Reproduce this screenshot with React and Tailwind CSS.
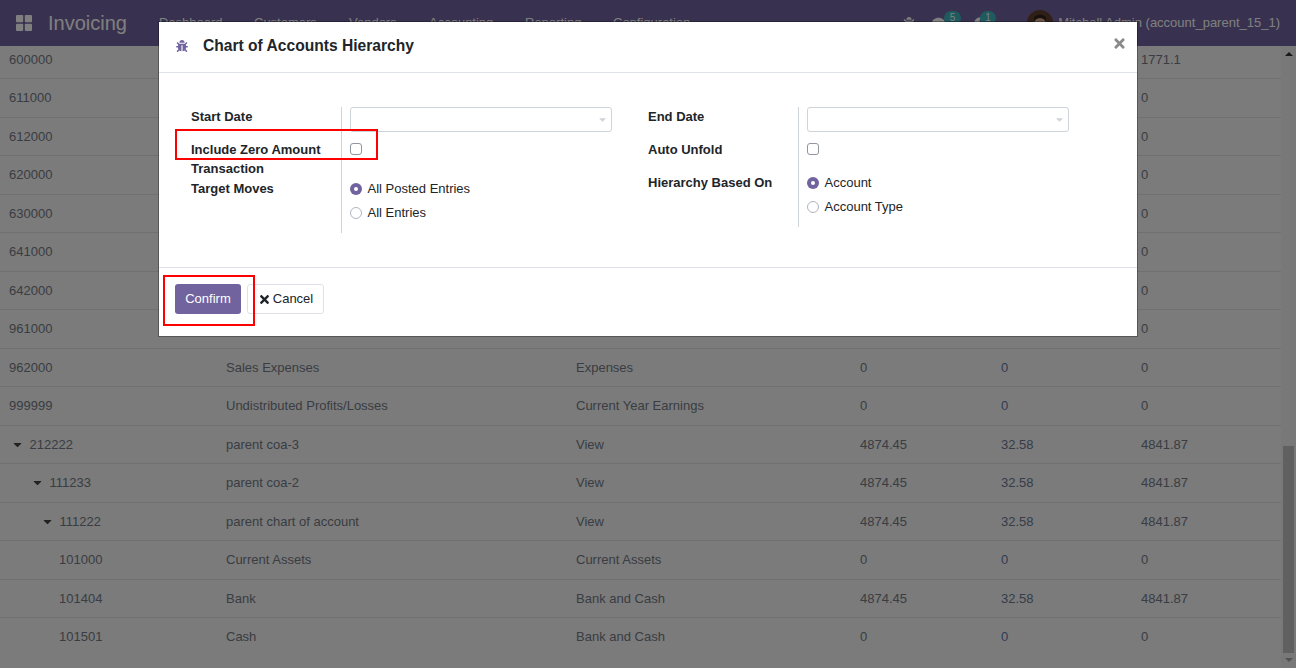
import { FaBug, FaCaretDown, FaClock, FaComment, FaTimes } from 'react-icons/fa';

const topRows = [
  { code: '600000', last: '1771.1' },
  { code: '611000', last: '0' },
  { code: '612000', last: '0' },
  { code: '620000', last: '0' },
  { code: '630000', last: '0' },
  { code: '641000', last: '0' },
  { code: '642000', last: '0' },
  { code: '961000', last: '0' },
];

const rows = [
  { code: '962000', name: 'Sales Expenses', type: 'Expenses', debit: '0', credit: '0', last: '0' },
  { code: '999999', name: 'Undistributed Profits/Losses', type: 'Current Year Earnings', debit: '0', credit: '0', last: '0' },
  { code: '212222', name: 'parent coa-3', type: 'View', debit: '4874.45', credit: '32.58', last: '4841.87', caret: 'pl-[13px]' },
  { code: '111233', name: 'parent coa-2', type: 'View', debit: '4874.45', credit: '32.58', last: '4841.87', caret: 'pl-[33px]' },
  { code: '111222', name: 'parent chart of account', type: 'View', debit: '4874.45', credit: '32.58', last: '4841.87', caret: 'pl-[43px]' },
  { code: '101000', name: 'Current Assets', type: 'Current Assets', debit: '0', credit: '0', last: '0', indent: 'pl-[59px]' },
  { code: '101404', name: 'Bank', type: 'Bank and Cash', debit: '4874.45', credit: '32.58', last: '4841.87', indent: 'pl-[59px]' },
  { code: '101501', name: 'Cash', type: 'Bank and Cash', debit: '0', credit: '0', last: '0', indent: 'pl-[59px]' },
];

const Row = ({ row, isLast }) => (
  <div className={`flex h-[38.5px] items-center border-b ${isLast ? 'border-transparent' : 'border-[#e0e0e0]'}`}>
    <div className={`flex w-[226px] shrink-0 items-center ${row.caret || row.indent || 'pl-[9px]'}`}>
      {row.caret && <FaCaretDown className="mr-[7.5px] w-[9px] text-[13px] text-[#444444]" />}
      {row.code}
    </div>
    <div className="w-[350px] shrink-0">{row.name}</div>
    <div className="w-[284px] shrink-0">{row.type}</div>
    <div className="w-[141px] shrink-0">{row.debit}</div>
    <div className={`w-[140px] shrink-0 ${row.credit === '0' ? 'text-[#5f78a8]' : 'text-[#6b7a94]'}`}>{row.credit}</div>
    <div>{row.last}</div>
  </div>
);

const Radio = ({ label, checked }) => (
  <div className="flex h-[24px] items-center">
    {checked ? (
      <span className="mr-[5.5px] flex h-[12px] w-[12px] items-center justify-center rounded-full bg-[#71639e]">
        <span className="h-[4px] w-[4px] rounded-full bg-white" />
      </span>
    ) : (
      <span className="mr-[5.5px] h-[12px] w-[12px] rounded-full border border-[#adb5bd] bg-white" />
    )}
    {label}
  </div>
);

const DateInput = () => (
  <div className="flex h-[25px] w-[262px] items-center justify-end rounded-[3px] border border-[#ced4da] bg-white pr-[3px]">
    <FaCaretDown className="text-[11px] text-[#ced4da]" />
  </div>
);

const Checkbox = () => (
  <span className="block h-[12px] w-[12px] rounded-[3px] border border-[#8f96a0] bg-white" />
);

const App = () => {
  return (
    <div className="relative h-[668px] w-[1296px] overflow-hidden bg-[#f6f6f6] font-['Liberation_Sans',Arial,sans-serif] text-[13px] text-[#757a85]">
      <header className="flex h-[46px] items-center bg-[#71639e] text-white">
        <svg className="ml-[16px] h-[16px] w-[16px]" viewBox="0 0 16 16" fill="currentColor">
          <rect x="0" y="0" width="7.2" height="7.2" rx="1" />
          <rect x="8.8" y="0" width="7.2" height="7.2" rx="1" />
          <rect x="0" y="8.8" width="7.2" height="7.2" rx="1" />
          <rect x="8.8" y="8.8" width="7.2" height="7.2" rx="1" />
        </svg>
        <span className="ml-[16px] w-[111px] text-[20px]">Invoicing</span>
        <nav className="flex text-[13px]">
          <span className="w-[95px]">Dashboard</span>
          <span className="w-[95px]">Customers</span>
          <span className="w-[80px]">Vendors</span>
          <span className="w-[96px]">Accounting</span>
          <span className="w-[88px]">Reporting</span>
          <span>Configuration</span>
        </nav>
        <div className="ml-auto flex items-center pr-[16px]">
          <FaBug className="mr-[17px] text-[12px]" />
          <span className="relative mr-[29px]">
            <FaComment className="text-[13px]" />
            <span className="absolute -right-[16px] -top-[6px] w-[17px] rounded-full bg-[#3cb4bc] text-center text-[10px] leading-[14px]">5</span>
          </span>
          <span className="relative mr-[40px]">
            <FaClock className="text-[13px]" />
            <span className="absolute -right-[9px] -top-[6px] w-[16px] rounded-full bg-[#3cb4bc] text-center text-[10px] leading-[14px]">1</span>
          </span>
          <svg className="mr-[5px] h-[26px] w-[26px]" viewBox="0 0 26 26">
            <circle cx="13" cy="13" r="13" fill="#5f3f2c" />
            <ellipse cx="13" cy="15" rx="6" ry="8" fill="#d2ab8e" />
            <path d="M7 11 Q13 5 19 11 L19 7 Q13 2 7 7 Z" fill="#2e2018" />
          </svg>
          <span>Mitchell Admin (account_parent_15_1)</span>
        </div>
      </header>

      <main className="flex h-[622px]">
        <div className="w-[1281px] shrink-0 overflow-hidden">
          <div className="-mt-[5.5px]">
            {topRows.map((row) => (
              <Row key={row.code} row={row} />
            ))}
            {rows.map((row, i) => (
              <Row key={row.code} row={row} isLast={i === rows.length - 1} />
            ))}
          </div>
        </div>
        <div className="flex w-[15px] flex-col items-center bg-[#f1f1f1]">
          <span className="mt-[6px] h-0 w-0 border-x-[4px] border-b-[4px] border-x-transparent border-b-[#333333]" />
          <div className="flex-1" />
          <div className="h-[207px] w-[11px] bg-[#c1c1c1]" />
          <span className="mb-[6px] mt-[5px] h-0 w-0 border-x-[4px] border-t-[4px] border-x-transparent border-t-[#a3a3a3]" />
        </div>
      </main>

      <div className="absolute inset-0 flex justify-center bg-black/50 pt-[21px]">
        <div className="relative h-[316px] w-[980px] border border-black/30 bg-white bg-clip-padding text-[#212529]">
          <div className="flex h-[51px] items-center border-b border-[#dee2e6] pb-[3px] pl-[17px] pr-[10px]">
            <FaBug className="mr-[15px] text-[12px] text-[#71639e]" />
            <h4 className="text-[15.6px] font-bold">Chart of Accounts Hierarchy</h4>
            <FaTimes className="ml-auto -mt-[5px] text-[15px] text-[#8a8a8a]" />
          </div>

          <div className="flex h-[194px] pl-[32px] pt-[34px]">
            <div className="flex h-[126px] w-[421px]">
              <div className="w-[151px] border-r border-[#ced4da] font-bold">
                <div className="h-[25px] leading-[19px]">Start Date</div>
                <div className="pt-[8px] leading-[19px]">Include Zero Amount Transaction</div>
                <div className="pt-[1px] leading-[19px]">Target Moves</div>
              </div>
              <div className="pl-[8px]">
                <DateInput />
                <div className="pt-[11px]">
                  <Checkbox />
                </div>
                <div className="pt-[22px]">
                  <Radio label="All Posted Entries" checked />
                  <Radio label="All Entries" />
                </div>
              </div>
            </div>
            <div className="ml-[36px] flex h-[120px] w-[421px]">
              <div className="w-[151px] border-r border-[#ced4da] font-bold">
                <div className="h-[25px] leading-[19px]">End Date</div>
                <div className="pt-[8px] leading-[19px]">Auto Unfold</div>
                <div className="pt-[14px] leading-[19px]">Hierarchy Based On</div>
              </div>
              <div className="pl-[8px]">
                <DateInput />
                <div className="pt-[11px]">
                  <Checkbox />
                </div>
                <div className="pt-[16px]">
                  <Radio label="Account" checked />
                  <Radio label="Account Type" />
                </div>
              </div>
            </div>
          </div>

          <div className="flex gap-[6px] border-t border-[#dee2e6] pl-[16px] pt-[16px]">
            <button className="h-[30px] w-[66px] rounded-[3px] bg-[#71639e] text-[13px] text-white">Confirm</button>
            <button className="flex h-[30px] w-[77px] items-center justify-center gap-[2px] rounded-[3px] border border-[#dee2e6] bg-white text-[13px]">
              <FaTimes className="text-[13px]" />
              Cancel
            </button>
          </div>

          <div className="absolute left-[16px] top-[107px] h-[31px] w-[203px] border-2 border-[#ff0000]" />
          <div className="absolute left-[4px] top-[253px] h-[51px] w-[92px] border-2 border-[#ff0000]" />
        </div>
      </div>
    </div>
  );
};

export default App;
